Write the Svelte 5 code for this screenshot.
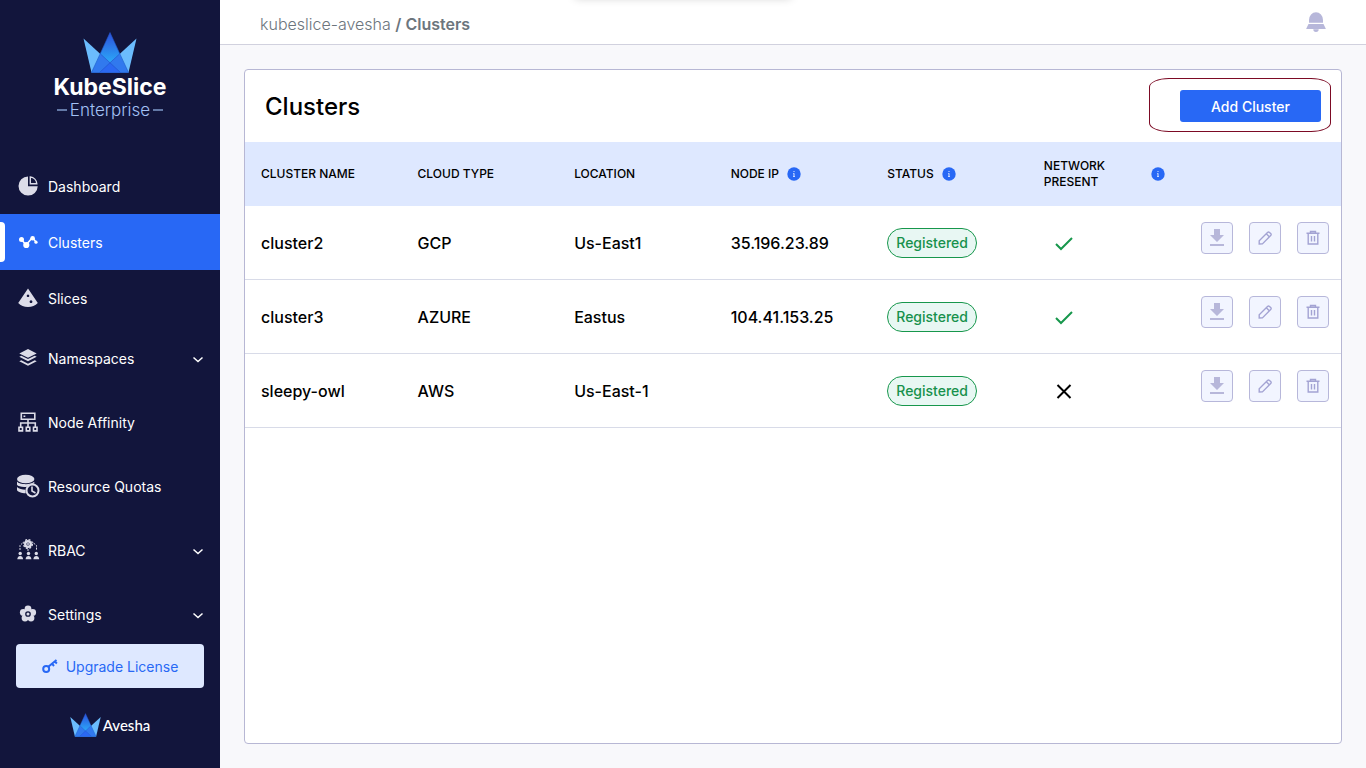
<script>
	let activeItem = 'Clusters';

	const mainItems = [
		{ name: 'Dashboard', icon: 'pie' },
		{ name: 'Clusters', icon: 'clusters' },
		{ name: 'Slices', icon: 'slices' }
	];

	const groupItems = [
		{ name: 'Namespaces', icon: 'layers', expandable: true },
		{ name: 'Node Affinity', icon: 'nodes' },
		{ name: 'Resource Quotas', icon: 'quotas' },
		{ name: 'RBAC', icon: 'rbac', expandable: true },
		{ name: 'Settings', icon: 'settings', expandable: true }
	];

	const columns = [
		{ label: 'Cluster Name' },
		{ label: 'Cloud Type' },
		{ label: 'Location' },
		{ label: 'Node IP', info: true },
		{ label: 'Status', info: true },
		{ label: 'Network Present', info: true }
	];

	const clusters = [
		{ name: 'cluster2', cloud: 'GCP', location: 'Us-East1', ip: '35.196.23.89', status: 'Registered', network: true },
		{ name: 'cluster3', cloud: 'AZURE', location: 'Eastus', ip: '104.41.153.25', status: 'Registered', network: true },
		{ name: 'sleepy-owl', cloud: 'AWS', location: 'Us-East-1', ip: '', status: 'Registered', network: false }
	];
</script>

{#snippet crown(id)}
	<svg class="crown" viewBox="0 0 54 41" aria-hidden="true">
		<defs>
			<linearGradient id="{id}" x1="0" y1="0" x2="0" y2="1">
				<stop offset="0" stop-color="#2c4fdc" />
				<stop offset="0.75" stop-color="#2ba8f8" />
				<stop offset="1" stop-color="#2ba8f8" />
			</linearGradient>
		</defs>
		<path d="M0.5 6.5L8.5 40.5H37.5z" fill="#6bbcfd" />
		<path d="M53.5 6.5L45.5 40.5H16.5z" fill="#6bbcfd" />
		<path d="M27 0.5L8.5 40.5h37z" fill="url(#{id})" />
		<path d="M17.5 22L8.5 40.5h29L27 30.5z" fill="#3179ee" />
		<path d="M36.5 22l9 18.5h-29L27 30.5z" fill="#3179ee" />
		<path d="M27 30.5l10.5 10h-21z" fill="#2b68f2" />
		<path d="M17.5 22l20 18.5M36.5 22l-20 18.5M27 .5L8.5 40.5h37z" fill="none" stroke="#2455c8" stroke-width="0.6" />
	</svg>
{/snippet}

{#snippet navIcon(icon)}
	<svg class="icon" viewBox="0 0 24 24" aria-hidden="true">
		{#if icon === 'pie'}
			<path d="M12 2.4A9.6 9.6 0 1 0 21.7 12.2H12z" />
			<path d="M14.3 3a7.2 7.2 0 0 1 6.5 6.7h-6.5z" fill="none" stroke="currentColor" stroke-width="1.4" />
		{:else if icon === 'clusters'}
			<path d="M5.5 9.5L10 15l6.5-7.5 3.8 5" fill="none" stroke="currentColor" stroke-width="1.5" />
			<circle cx="5.5" cy="9.6" r="2.5" />
			<circle cx="10.3" cy="15" r="3.1" />
			<circle cx="16.6" cy="8.2" r="2.3" />
			<circle cx="20" cy="12.2" r="1.6" />
		{:else if icon === 'slices'}
			<path fill-rule="evenodd" d="M12 2.5l9.8 14.6c-2.5 2.5-5.8 3.9-9.8 3.9s-7.3-1.4-9.8-3.9zM12 8.5a1.3 1.3 0 1 0 .01 0zM15 14.3a1.4 1.4 0 1 0 .01 0z" />
		{:else if icon === 'layers'}
			<path d="M12 3l8.7 4.4L12 11.8 3.3 7.4zM3.3 10.7l2-.9 6.7 3.3 6.7-3.3 2 .9-8.7 4.5zM3.3 15.2l2-.9 6.7 3.4 6.7-3.4 2 .9-8.7 4.5z" />
		{:else if icon === 'nodes'}
			<path d="M5.3 3.2h13.5v6H5.3zM12 9.2v8M4.7 17v-4h14.6v4M3 17.2h3.5v3.7H3zM10.3 17.2h3.5v3.7h-3.5zM17.5 17.2H21v3.7h-3.5z" fill="none" stroke="currentColor" stroke-width="1.6" />
			<path d="M7.5 5.5h1.8v1.5H7.5z" />
		{:else if icon === 'quotas'}
			<ellipse cx="9.7" cy="5" rx="8.7" ry="4.3" />
			<path d="M1 7.5c2 3.2 14 3.8 17.3.2v2c-3.500-.2-5.800 1-7 3C6.500 13.300 2 12.500 1 10.700zM1 13c2 2 5 2.700 8.500 2.700l.2 3.600C5.500 19.200 1.500 17.800 1 16z" />
			<circle cx="16.5" cy="16.5" r="6" fill="none" stroke="currentColor" stroke-width="2" />
			<path d="M16 12.500v4.500l3.500 2" fill="none" stroke="currentColor" stroke-width="1.6" />
		{:else if icon === 'rbac'}
			<circle cx="12" cy="6" r="2.8" fill="none" stroke="currentColor" stroke-width="2.4" />
			<circle cx="12" cy="6" r="4.4" fill="none" stroke="currentColor" stroke-width="1.3" stroke-dasharray="2 1.46" />
			<circle cx="12" cy="6" r="1" />
			<path d="M6.5 5L4 7.5v5M17.5 5L20.5 7.500v5M12 11v3" fill="none" stroke="currentColor" stroke-width="1" stroke-dasharray="2 1" />
			<circle cx="4.2" cy="15.5" r="1.7" />
			<circle cx="12.5" cy="15.5" r="1.7" />
			<circle cx="20.3" cy="15.5" r="1.7" />
			<path d="M1.300 21.300c0-4.500 5.800-4.500 5.800 0zM9.600 21.300c0-4.500 5.800-4.500 5.800 0zM17.400 21.300c0-4.500 5.800-4.500 5.800 0z" />
		{:else}
			<circle cx="12" cy="7" r="3.4" />
			<circle cx="16.7" cy="10.4" r="3.4" />
			<circle cx="15" cy="16.1" r="3.4" />
			<circle cx="9" cy="16.1" r="3.4" />
			<circle cx="7.3" cy="10.4" r="3.4" />
			<circle cx="12" cy="12" r="5" />
			<circle cx="12" cy="12" r="2.2" fill="#dcdce8" stroke="#12153c" stroke-width="1.3" />
		{/if}
	</svg>
{/snippet}

{#snippet navItem(item)}
	<li>
		<a
			href="#{item.icon}"
			class:active="{activeItem === item.name}"
			on:click|preventDefault="{() => {
				activeItem = item.name;
			}}">
			{@render navIcon(item.icon)}
			<span>{item.name}</span>
			{#if item.expandable}
				<svg class="chevron" viewBox="0 0 12 12" aria-hidden="true"><path d="M1.5 5.5l4.5 4 4.5-4" /></svg>
			{/if}
		</a>
	</li>
{/snippet}

<div class="app">
	<!-- Sidebar -->
	<aside>
		<div class="logo">
			{@render crown('crownTop')}
			<strong>KubeSlice</strong>
			<span>Enterprise</span>
		</div>
		<nav>
			<ul>
				{#each mainItems as item}
					{@render navItem(item)}
				{/each}
			</ul>
			<ul class="groups">
				{#each groupItems as item}
					{@render navItem(item)}
				{/each}
			</ul>
		</nav>
		<button class="upgrade">
			<svg viewBox="0 0 16 16" aria-hidden="true">
				<circle cx="4.2" cy="11" r="3" />
				<path d="M6.3 8.8L14.5 2M10 5.7l2 2.3M12.5 3.2l2.4 2.3" />
			</svg>
			Upgrade License
		</button>
		<div class="brand">
			{@render crown('crownBottom')}
			<span>Avesha</span>
		</div>
	</aside>
	<!-- xSidebar -->

	<div class="content">
		<header>
			<p><a href="#project">kubeslice-avesha</a> <b>/ Clusters</b></p>
			<button class="bell" aria-label="Notifications">
				<svg viewBox="0 0 20 20" aria-hidden="true">
					<path d="M3 10.8V8a7 7.8 0 0 1 14 0v2.8zM2.5 12h15l2.2 4.5v.5H.3v-.5zM7.3 17.3h5.4a2.7 2.7 0 0 1-5.4 0z" />
				</svg>
			</button>
		</header>

		<main>
			<section>
				<div class="title">
					<h1>Clusters</h1>
					<div class="highlight">
						<button>Add Cluster</button>
					</div>
				</div>

				<!-- Clusters table -->
				<table>
					<thead>
						<tr>
							{#each columns as column}
								<th>
									<div>
										<span>{column.label}</span>
										{#if column.info}
											<svg viewBox="0 0 14 14" aria-hidden="true">
												<circle cx="7" cy="7" r="6.7" fill="#2868f5" />
												<path d="M6.5 4h1v1h-1zM6 6.3h1.5v2.9H8v.8H6v-.8h.5V7.1H6z" fill="#dee8ff" />
											</svg>
										{/if}
									</div>
								</th>
							{/each}
							<td></td>
						</tr>
					</thead>
					<tbody>
						{#each clusters as cluster}
							<tr>
								<td>{cluster.name}</td>
								<td>{cluster.cloud}</td>
								<td>{cluster.location}</td>
								<td>{cluster.ip}</td>
								<td><span class="status">{cluster.status}</span></td>
								<td>
									{#if cluster.network}
										<svg class="mark yes" viewBox="0 0 24 24" role="img" aria-label="Yes"><path d="M4 13l5 5L20 7" /></svg>
									{:else}
										<svg class="mark" viewBox="0 0 24 24" role="img" aria-label="No"><path d="M5.5 6l13 13M18.5 6l-13 13" /></svg>
									{/if}
								</td>
								<td class="actions">
									<div>
										<button aria-label="Download {cluster.name}">
											<svg viewBox="0 0 20 20"><path d="M7 1h6v6h4L10 14 3 7h4zM3 16h14v2H3z" fill="#b7b7da" /></svg>
										</button>
										<button aria-label="Edit {cluster.name}">
											<svg viewBox="0 0 20 20"><path d="M4.2 16v-3.3l8.3-8.3q1-.9 2 0l1.2 1.2q1 1 0 2l-8.3 8.3zM11.3 5.7l3.2 3.2" /></svg>
										</button>
										<button aria-label="Delete {cluster.name}">
											<svg viewBox="0 0 20 20"><path d="M3.5 5.3h13M7.5 5V3.5h5V5M5.2 5.500v10.500h9.600v-10.500M8.500 8v5.500M11.500 8v5.500" /></svg>
										</button>
									</div>
								</td>
							</tr>
						{/each}
					</tbody>
				</table>
				<!-- xClusters table -->
			</section>
		</main>
	</div>
</div>

<style>
	:global(body) {
		margin: 0;
		background: #f8f8fb;
	}

	.app {
		display: flex;
		min-height: 100vh;
		font-family: Inter, Roboto, sans-serif;
		font-size: 14px;
		color: #000;
		position: relative;
		overflow: hidden;
	}

	.app:before {
		content: '';
		position: absolute;
		top: -22px;
		left: 50%;
		width: 216px;
		height: 20px;
		transform: translateX(-50%);
		box-shadow: 0 0 10px rgba(0, 0, 0, 0.2);
	}

	button {
		font: inherit;
		padding: 0;
		cursor: pointer;
		border: 0;
	}

	a {
		color: inherit;
		text-decoration: none;
	}

	aside {
		flex: 0 0 220px;
		display: flex;
		flex-direction: column;
		background: #12153c;
		color: #fff;
	}

	.logo {
		display: flex;
		flex-direction: column;
		align-items: center;
		padding: 32px 0 39px;
	}

	.logo .crown {
		width: 54px;
		height: 41px;
	}

	.logo strong {
		font-size: 23px;
		line-height: 28px;
		font-weight: 700;
	}

	.logo span {
		display: flex;
		align-items: center;
		gap: 3px;
		font-size: 17px;
		line-height: 18px;
		font-weight: 300;
		color: #a3c1f5;
	}

	.logo span:before,
	.logo span:after {
		content: '';
		width: 10px;
		height: 2px;
		background: #6378a6;
	}

	nav ul {
		margin: 0;
		padding: 0;
		list-style: none;
	}

	nav .groups {
		display: grid;
		gap: 8px;
		padding: 4px 0 2px;
	}

	nav a {
		display: flex;
		align-items: center;
		gap: 8px;
		height: 56px;
		padding: 0 16px;
		position: relative;
	}

	nav a.active {
		background: #2868f5;
	}

	nav a.active:before {
		content: '';
		position: absolute;
		left: 0;
		top: 8px;
		width: 5px;
		height: 40px;
		border-radius: 0 4px 4px 0;
		background: #fff;
	}

	.icon {
		width: 24px;
		height: 24px;
		fill: currentColor;
		color: #dcdce8;
	}

	.active .icon {
		color: #fff;
	}

	.chevron {
		width: 12px;
		height: 12px;
		margin-left: auto;
		fill: none;
		stroke: #fff;
		stroke-width: 1.5;
	}

	.upgrade {
		display: flex;
		align-items: center;
		justify-content: center;
		gap: 8px;
		height: 44px;
		margin: 0 16px;
		border-radius: 4px;
		background: #dee8ff;
		color: #2868f5;
	}

	.upgrade svg {
		width: 16px;
		height: 16px;
		fill: none;
		stroke: #2868f5;
		stroke-width: 2;
	}

	.brand {
		display: flex;
		justify-content: center;
		align-items: center;
		gap: 2px;
		padding: 25px 0;
		font-family: Lato, sans-serif;
		font-size: 15px;
		line-height: 24px;
		font-weight: 500;
	}

	.brand .crown {
		width: 31px;
		height: 24px;
	}

	.content {
		flex: 1;
		min-width: 0;
		display: flex;
		flex-direction: column;
	}

	header {
		display: flex;
		align-items: center;
		justify-content: space-between;
		height: 44px;
		padding: 0 40px;
		background: #fff;
		border-bottom: solid 1px #d1d1de;
	}

	header p {
		margin: 4px 0 0;
		font-size: 16px;
		font-weight: 300;
		color: #6c757d;
	}

	header b {
		font-weight: 600;
	}

	.bell {
		background: none;
	}

	.bell svg {
		display: block;
		width: 20px;
		height: 20px;
		fill: #b7b7da;
	}

	main {
		flex: 1;
		display: flex;
		padding: 24px;
	}

	section {
		flex: 1;
		background: #fff;
		border: solid 1px #b7b7d4;
		border-radius: 4px;
	}

	.title {
		display: flex;
		align-items: center;
		justify-content: space-between;
		height: 72px;
		padding: 0 10px 0 20px;
	}

	h1 {
		margin: 0;
		font-size: 24px;
		font-weight: 500;
	}

	.highlight {
		margin-bottom: 2px;
		padding: 11px 9px 9px 30px;
		border: solid 1px #7c0a24;
		border-radius: 20px / 9px;
	}

	.highlight button {
		display: block;
		width: 141px;
		height: 32px;
		border-radius: 3px;
		background: #2868f5;
		color: #fff;
		font-weight: 500;
	}

	table {
		width: 100%;
		table-layout: fixed;
		border-spacing: 0;
	}

	thead tr {
		height: 64px;
		background: #dee8ff;
	}

	th,
	td {
		padding: 0 0 0 16px;
		text-align: left;
	}

	th {
		font-size: 12px;
		line-height: 16px;
		font-weight: 500;
		text-transform: uppercase;
	}

	th div {
		display: flex;
		align-items: center;
		gap: 8px;
	}

	th:nth-child(6) div {
		justify-content: space-between;
		padding-right: 19px;
	}

	th:nth-child(6) span {
		width: 72px;
	}

	th svg {
		flex: none;
		width: 14px;
		height: 14px;
	}

	tbody tr {
		height: 74px;
	}

	tbody td {
		border-bottom: solid 1px #d8dbe8;
		font-size: 16px;
		font-weight: 500;
	}

	.status {
		display: inline-block;
		padding: 0 8px;
		border: solid 1px #17974c;
		border-radius: 15px;
		background: #e8f7f3;
		color: #17914c;
		font-size: 14px;
		line-height: 28px;
	}

	.mark {
		display: block;
		width: 24px;
		height: 24px;
		margin-left: 8px;
		fill: none;
		stroke: #000;
		stroke-width: 2;
	}

	.mark.yes {
		stroke: #17974c;
	}

	td.actions {
		padding: 16px 12px 0 0;
		vertical-align: top;
	}

	.actions div {
		display: flex;
		justify-content: flex-end;
		gap: 16px;
	}

	.actions button {
		display: grid;
		place-items: center;
		flex: 0 0 32px;
		height: 32px;
		border: solid 1px #b7b7da;
		border-radius: 4px;
		background: #f2f5ff;
	}

	.actions svg {
		width: 20px;
		height: 20px;
		fill: none;
	}

	.actions path {
		stroke: #a3a3d3;
		stroke-width: 1.4;
	}

	.actions path[fill] {
		stroke: none;
	}
</style>
